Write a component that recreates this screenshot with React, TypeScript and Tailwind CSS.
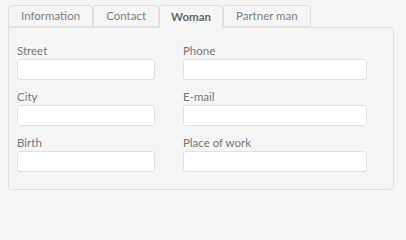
import React, { useState } from "react";

const tabs = ["Information", "Contact", "Woman", "Partner man"];

const Field: React.FC<{ label: string; className?: string }> = ({ label, className }) => (
    <div className="flex flex-col">
        <label className="text-[11.5px] leading-[14px] text-[#777] mb-px">{label}</label>
        <input
            className={`h-[21px] bg-white border border-[#e1e1e1] rounded-[3px] outline-none ${className ?? ""}`}
        />
    </div>
);

const App: React.FC = () => {
    const [active, setActive] = useState(2);

    return (
        <div
            className="w-[406px] h-[240px] bg-[#f6f6f6] px-2 pt-[5px]"
            style={{ fontFamily: 'Lato, "Open Sans", sans-serif' }}
        >
            <div className="flex items-end">
                {tabs.map((t, i) => (
                    <button
                        key={t}
                        onClick={() => setActive(i)}
                        className={
                            i === active
                                ? "relative z-10 h-[23px] -mb-px px-[11px] border border-b-0 border-[#e1e1e1] rounded-t-[3px] bg-[#f6f6f6] text-[11.5px] font-bold text-[#666]"
                                : "h-[22px] px-[12px] border border-[#e1e1e1] rounded-t-[3px] bg-[#f6f6f6] text-[11.5px] text-[#808080]"
                        }
                    >
                        {t}
                    </button>
                ))}
            </div>
            <div className="w-[386px] border border-[#e1e1e1] rounded-b-[3px] rounded-tr-[3px] pl-[8px] pt-[16px] pb-[17px]">
                <div className="grid grid-cols-[166px_184px] gap-y-[10px]">
                    <Field label="Street" className="w-[138px]" />
                    <Field label="Phone" className="w-[184px]" />
                    <Field label="City" className="w-[138px]" />
                    <Field label="E-mail" className="w-[184px]" />
                    <Field label="Birth" className="w-[138px]" />
                    <Field label="Place of work" className="w-[184px]" />
                </div>
            </div>
        </div>
    );
};

export default App;
